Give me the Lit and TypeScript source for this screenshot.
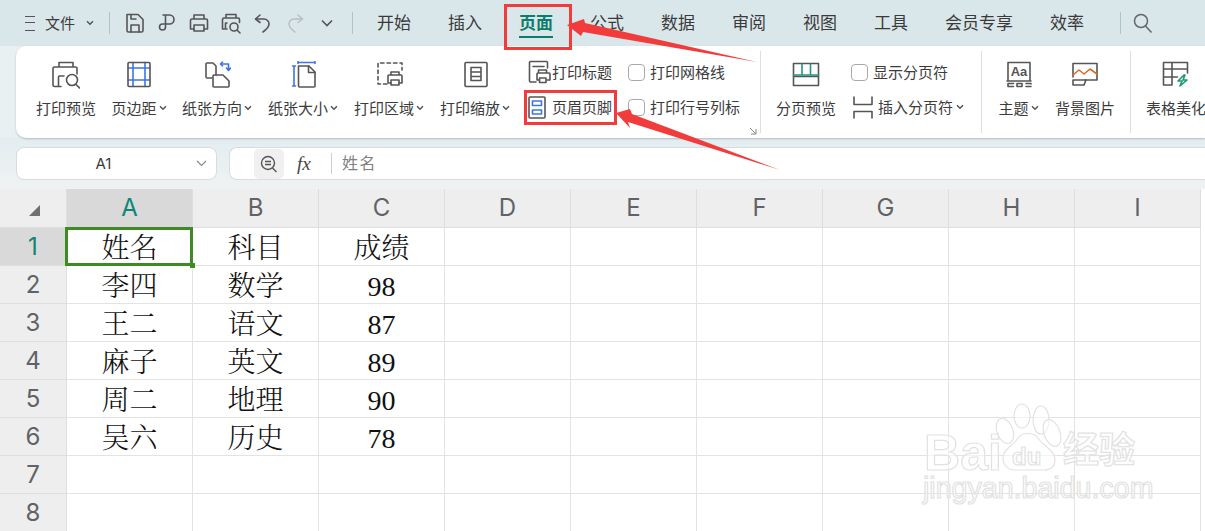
import { LitElement, html, css, svg, nothing } from "lit";
import { customElement } from "lit/decorators.js";

const ink = "#555555";
const blue = "#3f74e6";

const ic = (w: number, h: number, body: unknown) =>
  html`<svg class="ic" width=${w} height=${h} viewBox="0 0 ${w} ${h}" fill="none" stroke=${ink} stroke-width="1.6" stroke-linejoin="round" stroke-linecap="round">${body}</svg>`;

const chev = html`<svg class="chev" width="8" height="6" viewBox="0 0 8 6" fill="none" stroke="#555" stroke-width="1.5"><path d="M1 1.2 4 4.2 7 1.2"/></svg>`;

const icons: Record<string, unknown> = {
  save: ic(24, 24, svg`<path d="M4 3.500h11l5 5v11a1.500 1.500 0 0 1-1.500 1.500h-13A1.500 1.500 0 0 1 4 19.500z"/><path d="M8 21v-7h8v7M8 4v4h5"/>`),
  clip: ic(24, 24, svg`<path d="M8 4h6.500a4.500 4.500 0 0 1 0 9H7.500a3 3 0 1 0 3 3V4"/>`),
  print: ic(24, 24, svg`<path d="M7 8V4h10v4M7 18H3.500V9.500a1.500 1.500 0 0 1 1.500-1.500h14a1.500 1.500 0 0 1 1.500 1.500V18H17"/><path d="M7 14h10v6H7z"/>`),
  preview: ic(24, 24, svg`<path d="M7 7V3.500h10V7M8 18H3.500V8.500A1.500 1.500 0 0 1 5 7h14a1.500 1.500 0 0 1 1.500 1.500v3"/><path d="M8 12H6.500v5"/><circle cx="15" cy="16" r="4"/><path d="m18 19 3 3"/>`),
  undo: ic(24, 24, svg`<path d="M9 4 4.500 8 9 11.500"/><path d="M5 8h8a5 5 0 0 1 5 5c0 3-2 5-6 8"/>`),
  redo: html`<svg class="ic" width="24" height="24" viewBox="0 0 24 24" fill="none" stroke="#b9bfc1" stroke-width="1.5" stroke-linejoin="round" stroke-linecap="round"><path d="M15 4l4.500 4-4.500 3.500"/><path d="M19 8h-8a5 5 0 0 0-5 5c0 3 2 5 6 8"/></svg>`,
  more: html`<svg class="ic" width="24" height="24" viewBox="0 0 24 24" fill="none" stroke="#555" stroke-width="1.6"><path d="m7 9.500 5 5 5-5"/></svg>`,
  search: html`<svg class="ic" width="20" height="22" viewBox="0 0 20 22" fill="none" stroke="#666" stroke-width="1.5"><circle cx="8" cy="9" r="6.500"/><path d="m12.500 14 6 6.500"/></svg>`,
  lgPreview: ic(28, 28, svg`<path d="M7 6V1.500h14V6M9 25.500H2.500a1.500 1.500 0 0 1-1.500-1.500V7.500A1.500 1.500 0 0 1 2.500 6h21A1.500 1.500 0 0 1 25 7.500V13"/><path d="M12 15H7.500a1 1 0 0 0-1 1v9"/><circle cx="20" cy="19" r="5.500"/><path d="m24 23.500 3.500 3.500"/>`),
  margin: ic(28, 28, svg`<path stroke=${blue} d="M8 1.500v24M20 1.500v24M3 7h22M3 19h22"/><rect x="3" y="1.500" width="22" height="24" rx="1"/>`),
  orient: ic(28, 28, svg`<path d="M9 17H4a1 1 0 0 1-1-1V3a1 1 0 0 1 1-1h6l3 3v9"/><path d="M10 24V15a1 1 0 0 1 1-1h9l6 6v5a1 1 0 0 1-1 1H11a1 1 0 0 1-1-1z"/><path stroke=${blue} d="M19.500 1l-2 2 2 2M18 3h7.500v6M23.500 7l2 2.500 2-2.500"/>`),
  size: ic(28, 28, svg`<path stroke=${blue} d="M9 1.500h17M9 .5v2M26 .5v2M5 5v20M3.500 5h3M3.500 25h3"/><path d="M9.500 5H20l6 6v14a1 1 0 0 1-1 1H10.500a1 1 0 0 1-1-1z"/><path d="M19.500 5v6.500H26"/>`),
  area: ic(28, 28, svg`<path stroke-dasharray="3.500 3" d="M12 23H3V2h24v7"/><path d="M16 14v-3h8v3M16 22h-3v-7a1 1 0 0 1 1-1h12a1 1 0 0 1 1 1v7h-3"/><path d="M16 19h8v5h-8z"/>`),
  scale: ic(28, 28, svg`<rect x="4" y="1.500" width="22" height="24" rx="1"/><path d="M10 6.500h10v13H10zM10 11h10M10 15.500h10"/>`),
  title: ic(24, 24, svg`<path d="M8 22H2.500a1 1 0 0 1-1-1V2.500a1 1 0 0 1 1-1h16a1 1 0 0 1 1 1V8"/><path d="M5 6.500h11"/><path d="M10.500 13v-3h8v3M11.500 20h-2.500v-6a1 1 0 0 1 1-1h11a1 1 0 0 1 1 1v6h-3"/><path d="M11.500 18h6.500v4.500h-6.500z"/>`),
  hf: ic(24, 24, svg`<rect x="1" y="2" width="16" height="21" rx="1"/><path stroke=${blue} d="M4.500 6h9v4.500h-9zM4.500 15h9v4h-9z"/>`),
  pagebreak: ic(28, 28, svg`<path d="M1.500 2.500h25v22h-25zM1.500 15.500h25"/><path stroke="#21967c" d="M1.500 14h25M10 3v11M18.500 3v11"/>`),
  insert: ic(24, 24, svg`<path d="M3 2v7.500h18V2M3 23v-6.500h18V23"/>`),
  theme: ic(28, 28, svg`<path d="M3 19V1.500h22V19M2 20h24M3 25.500v-3h5.500M3 25.500h5.500M12 22.500h5v3h-5zM21 22.500h5v.5M21 25.500h5"/><text x="14" y="14.500" font-family="Liberation Sans, sans-serif" font-size="13" font-weight="700" fill=${ink} stroke="none" text-anchor="middle">Aa</text>`),
  bg: ic(28, 28, svg`<path d="M2 16V2.500h24V19H14"/><path stroke="#d96a28" d="M2 14l6-5 5 4 6-5 7 5"/><path d="M2 19h13l-2 5H2z"/>`),
  beautify: ic(28, 28, svg`<path d="M1.500 24V1.500h24V12M1.500 8h24M1.500 16h14M10 1.500V24M1.500 24H10"/><path stroke="#1b9a74" d="M22 14l-6 6h4l-2 5 7-6h-4l2-5z"/>`),
};

const q = ["save", "clip", "print", "preview", "undo", "redo", "more"];
const tabs = ["开始", "插入", "页面", "公式", "数据", "审阅", "视图", "工具", "会员专享", "效率"];
const g1 = [
  { i: "lgPreview", t: "打印预览", w: 76 },
  { i: "margin", t: "页边距", w: 70, c: 1 },
  { i: "orient", t: "纸张方向", w: 86, c: 1 },
  { i: "size", t: "纸张大小", w: 86, c: 1 },
  { i: "area", t: "打印区域", w: 86, c: 1 },
  { i: "scale", t: "打印缩放", w: 86, c: 1 },
];
const cols = ["A", "B", "C", "D", "E", "F", "G", "H", "I"];
const data = [
  ["姓名", "科目", "成绩"],
  ["李四", "数学", "98"],
  ["王二", "语文", "87"],
  ["麻子", "英文", "89"],
  ["周二", "地理", "90"],
  ["吴六", "历史", "78"],
  ["", "", ""],
  ["", "", ""],
];

@customElement("app-root")
export class AppRoot extends LitElement {
  static styles = css`
    :host {
      display: block;
      width: 1205px;
      height: 531px;
      overflow: hidden;
      position: relative;
      background: #e9f0f2;
      font-family: "Noto Sans CJK SC", sans-serif;
      color: #3c3c3c;
    }
    .ic { display: block; flex: none; }
    .chev { display: block; flex: none; }
    .top {
      height: 46px;
      background: #dae7ea;
      display: flex;
      align-items: center;
      padding-left: 25px;
      box-sizing: border-box;
    }
    .burger { width: 10px; height: 15px; border-top: 1.5px solid #555; border-bottom: 1.5px solid #555; position: relative; box-sizing: border-box; margin-right: 10px; flex: none; }
    .burger::after { content: ""; position: absolute; left: 0; right: 0; top: 5px; height: 1.5px; background: #555; }
    .file { font-size: 15px; line-height: 20px; }
    .file + .chev { margin: 0 0 0 11px; }
    .sep { width: 1px; height: 22px; background: #b4c2c6; flex: none; }
    .sep.s1 { margin: 0 13px 0 15px; }
    .sep.s2 { margin: 0 24px 0 13px; }
    .sep.s3 { margin: 0 12px 0 36px; }
    .quick { display: flex; gap: 8px; }
    .tabs { display: flex; gap: 37px; }
    .tab { font-size: 17px; line-height: 24px; padding-bottom: 2px; position: relative; color: #3a3a3a; }
    .tab.on { font-weight: 700; color: #0c7d6d; }
    .tab.on::after { content: ""; position: absolute; left: 0; right: 0; bottom: -2px; height: 2px; background: #0a7d6c; }

    .ribbon {
      margin-left: 16px;
      height: 92px;
      background: #fff;
      border-radius: 10px 0 0 10px;
      box-shadow: 0 1px 2px rgba(80, 100, 105, 0.35);
      display: flex;
      padding: 5px 0 0 12px;
      box-sizing: border-box;
      position: relative;
      overflow: hidden;
    }
    .group { display: flex; height: 82px; flex: none; }
    .div { width: 1px; height: 82px; background: #dcdfe0; flex: none; }
    .big { display: flex; flex-direction: column; align-items: center; flex: none; padding-top: 10px; box-sizing: border-box; }
    .big .lab { margin-top: 8px; display: flex; align-items: center; gap: 2px; font-size: 15px; line-height: 22px; white-space: nowrap; }
    .smalls { display: flex; flex-direction: column; gap: 12px; padding-top: 9px; flex: none; }
    .small { display: flex; align-items: center; font-size: 15px; line-height: 23px; height: 23px; white-space: nowrap; }
    .box { width: 17px; height: 17px; border: 1.5px solid #a9a9a9; border-radius: 4px; box-sizing: border-box; flex: none; margin: 2px 5px 0 0; }
    .gapped { margin-left: 3px; }
    .launch { position: absolute; left: 733px; top: 81px; }
    .sm1 { margin-left: 10px; width: 100px; }
    .sm2 { width: 132px; }
    .sm3 { width: 130px; }
    .spacer { width: 15px; flex: none; }

    .fbar { display: flex; padding: 9px 0; height: 33px; gap: 12px; padding-left: 16px; background: linear-gradient(#e3edf0, #eff2f3); }
    .name { width: 201px; height: 33px; box-sizing: border-box; background: #fff; border: 1px solid #d9dcdd; border-radius: 8px; display: flex; align-items: center; position: relative; justify-content: center; font: 15px/20px Inter, sans-serif; flex: none; padding-right: 26px; }
    .name svg { position: absolute; right: 9px; top: 12px; }
    .formula { flex: 1; height: 33px; box-sizing: border-box; background: #fff; border: 1px solid #d9dcdd; border-right: 0; border-radius: 8px 0 0 8px; display: flex; align-items: center; padding-left: 24px; }
    .zoombtn { width: 30px; height: 30px; background: #f0f0f0; border-radius: 5px; display: flex; align-items: center; justify-content: center; flex: none; }
    .fx { font: italic 19px/22px "Liberation Serif", serif; margin-left: 13px; width: 25px; color: #444; }
    .fsep { width: 1px; height: 21px; background: #cfcfcf; margin-left: 9px; margin-right: 10px; }
    .ftext { font-size: 16px; color: #808080; letter-spacing: 1.5px; line-height: 22px; margin-top: -4px; }

    .sheet { display: grid; grid-template-columns: 67px repeat(9, 126px); grid-template-rows: 39px; grid-auto-rows: 38px; background: #fff; }
    .h { background: #eeeeee; border-right: 1px solid #dedede; border-bottom: 1px solid #dedede; box-sizing: border-box; display: flex; align-items: center; justify-content: center; font: 24px/30px Inter, sans-serif; color: #5f6368; }
    .h.sel { background: #d9d9d9; color: #0d8674; }
    .corner::after { content: ""; width: 0; height: 0; border-style: solid; border-width: 0 0 11px 11px; border-color: transparent transparent #707070 transparent; margin: 4px 0 0 2px; }
    .cell { border-right: 1px solid #e3e3e3; border-bottom: 1px solid #e3e3e3; box-sizing: border-box; display: flex; align-items: center; justify-content: center; font: 300 28px/34px "Liberation Serif", "Noto Serif CJK SC", "Noto Sans CJK SC", serif; color: #111; position: relative; padding-top: 4px; }
    .cell.active::after { content: ""; position: absolute; left: -2px; top: -1px; right: -1px; bottom: -1px; border: 3px solid #3f8a22; pointer-events: none; z-index: 2; }
    .cell.active::before { content: ""; position: absolute; right: -3px; bottom: -3px; width: 5px; height: 5px; background: #3f8a22; z-index: 3; }

    .overlay { position: absolute; left: 0; top: 0; pointer-events: none; }
    .mark { font-family: "Liberation Sans", sans-serif; font-weight: 700; fill: rgba(255, 255, 255, 0.55); stroke: #e2e2e2; stroke-width: 1.2px; }
    .mark.cjk { font-family: "Noto Sans CJK SC", sans-serif; }
    .mark.thin { font-weight: 400; }
  `;

  private big(b: { i: string; t: string; w: number; c?: number }) {
    return html`<div class="big" style="width:${b.w}px">${icons[b.i]}<div class="lab">${b.t}${b.c ? chev : nothing}</div></div>`;
  }

  render() {
    return html`
      <div class="top">
        <span class="burger"></span><span class="file">文件</span>${chev}
        <span class="sep s1"></span>
        <div class="quick">${q.map((k) => icons[k])}</div>
        <span class="sep s2"></span>
        <div class="tabs">${tabs.map((t) => html`<div class="tab ${t === "页面" ? "on" : ""}">${t}</div>`)}</div>
        <span class="sep s3"></span>
        ${icons.search}
      </div>

      <div class="ribbon">
        <div class="group">
          ${g1.map((b) => this.big(b))}
          <div class="smalls sm1">
            <div class="small">${icons.title}打印标题</div>
            <div class="small">${icons.hf}页眉页脚</div>
          </div>
          <div class="smalls sm2">
            <div class="small"><span class="box"></span>打印网格线</div>
            <div class="small"><span class="box"></span>打印行号列标</div>
          </div>
        </div>
        <div class="div"></div>
        <div class="group">
          ${this.big({ i: "pagebreak", t: "分页预览", w: 90 })}
          <div class="smalls sm3">
            <div class="small"><span class="box"></span>显示分页符</div>
            <div class="small">${icons.insert}<span class="gapped"></span>插入分页符&nbsp;${chev}</div>
          </div>
        </div>
        <div class="div"></div>
        <div class="group">
          ${this.big({ i: "theme", t: "主题", w: 73, c: 1 })}
          ${this.big({ i: "bg", t: "背景图片", w: 60 })}
          <div class="spacer"></div>
        </div>
        <div class="div"></div>
        <div class="group">
          ${this.big({ i: "beautify", t: "表格美化", w: 90 })}
        </div>
        <svg class="launch" width="8" height="8" viewBox="0 0 8 8" fill="none" stroke="#888" stroke-width="1"><path d="M1 1l6 6M7 2v5H2"/></svg>
      </div>

      <div class="fbar">
        <div class="name">A1
          <svg width="11" height="7" viewBox="0 0 11 7" fill="none" stroke="#888" stroke-width="1.2"><path d="m1 1 4.500 4.500L10 1"/></svg>
        </div>
        <div class="formula">
          <div class="zoombtn"><svg width="20" height="20" viewBox="0 0 20 20" fill="none" stroke="#555" stroke-width="1.4"><circle cx="9" cy="9" r="6.500"/><path d="M6 7.500h6M6 10.500h6M13.500 14l4 4"/></svg></div>
          <span class="fx">fx</span><span class="fsep"></span><span class="ftext">姓名</span>
        </div>
      </div>

      <div class="sheet">
        <div class="h corner"></div>
        ${cols.map((c, i) => html`<div class="h ${i === 0 ? "sel" : ""}">${c}</div>`)}
        ${data.map(
          (r, y) => html`
            <div class="h ${y === 0 ? "sel" : ""}">${y + 1}</div>
            ${cols.map((_, x) => html`<div class="cell ${x === 0 && y === 0 ? "active" : ""}">${r[x] ?? ""}</div>`)}
          `
        )}
      </div>

      <svg class="overlay" width="1205" height="531" viewBox="0 0 1205 531">
        <g fill="rgba(255,255,255,0.55)" stroke="#e2e2e2" stroke-width="1.2">
          <ellipse cx="1022" cy="416" rx="8" ry="12"/>
          <ellipse cx="1041" cy="420" rx="8" ry="14"/>
          <ellipse cx="1005" cy="431" rx="8" ry="13" transform="rotate(-20 1005 431)"/>
          <ellipse cx="1052" cy="433" rx="8" ry="14" transform="rotate(-20 1052 433)"/>
          <path d="M1003 458c0-9 10-12 15-20 4-6 16-6 20 0 5 8 17 12 17 22 0 7-5 10-12 10h-28c-7 0-12-5-12-12z"/>
        </g>
        <text class="mark" x="924" y="470" font-size="50" textLength="78">Bai</text>
        <text class="mark" x="1012" y="465" font-size="24">du</text>
        <text class="mark cjk" x="1063" y="463" font-size="36">经验</text>
        <text class="mark thin" x="923" y="498" font-size="28.6">jingyan.baidu.com</text>

        <g fill="none" stroke="#f23c3c" stroke-width="3">
          <rect x="505.500" y="5.500" width="65" height="43"/>
          <rect x="525.500" y="91.500" width="90" height="32"/>
        </g>
        <g fill="#f23c3c">
          <polygon points="567,25 584,19 585,23 757,62 583,32 581,36"/>
          <polygon points="616,113 630,109 632,114 780,170 628,122 630,128"/>
        </g>
      </svg>
    `;
  }
}
